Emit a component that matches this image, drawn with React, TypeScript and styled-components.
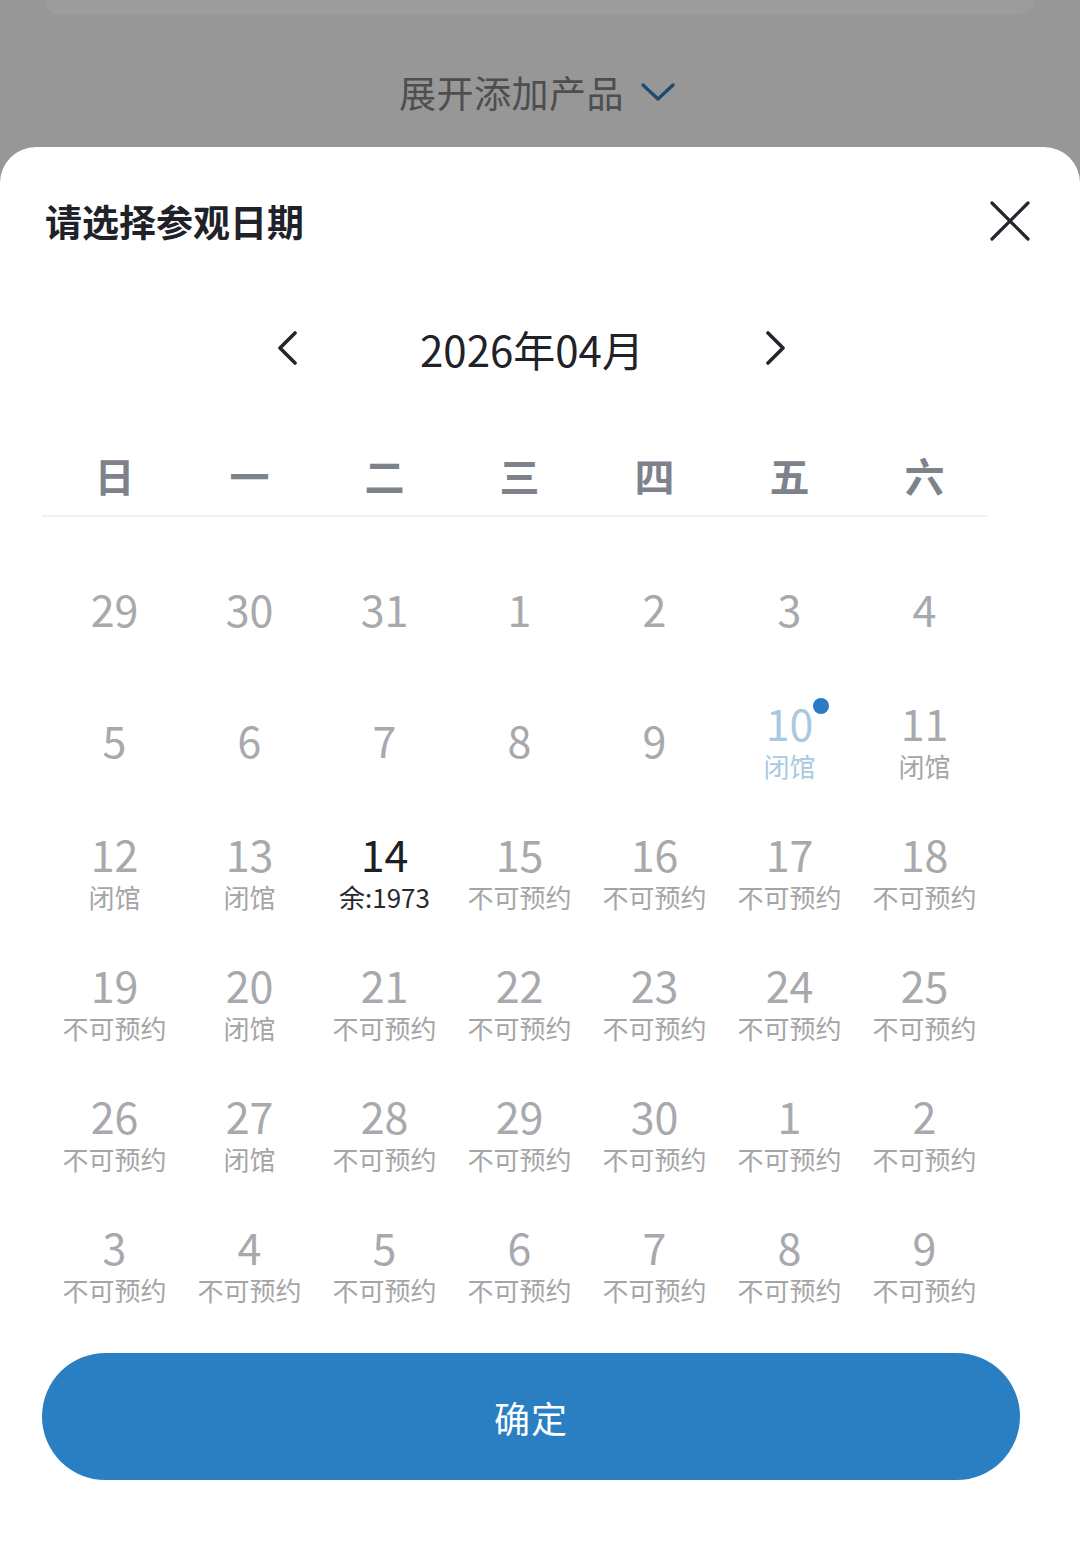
import React from 'react';
import styled, { createGlobalStyle } from 'styled-components';

const GlobalStyle = createGlobalStyle`
  html, body {
    margin: 0;
    padding: 0;
    background: #979797;
  }
  body {
    font-family: "Noto Sans CJK SC", "Noto Sans", sans-serif;
    width: 1080px;
    height: 1550px;
    overflow: hidden;
  }
`;

const Backdrop = styled.div`
  height: 147px;
  display: flex;
  flex-direction: column;
`;

const CardStub = styled.div`
  height: 15px;
  margin: 0 46px 0 45px;
  background: #9c9c9c;
  border-radius: 0 0 18px 18px;
`;

const ExpandRow = styled.div`
  flex: 1;
  display: flex;
  align-items: center;
  justify-content: center;
  gap: 17px;
  padding: 22px 6px 0 0;
  font-size: 37px;
  color: #4e4e4e;
  letter-spacing: 0.5px;
`;

const Sheet = styled.div`
  height: 1403px;
  background: #ffffff;
  border-radius: 36px 36px 0 0;
  display: flex;
  flex-direction: column;
`;

const Header = styled.div`
  height: 148px;
  display: flex;
  align-items: center;
  justify-content: space-between;
  padding: 0 50px 0 45px;
`;

const Title = styled.h2`
  margin: 0;
  font-size: 37px;
  font-weight: 700;
  color: #1f2228;
`;

const IconButton = styled.button`
  border: none;
  background: none;
  padding: 0;
  display: flex;
  align-items: center;
  justify-content: center;
  cursor: pointer;
`;

const MonthNav = styled.div`
  height: 106px;
  display: flex;
  align-items: center;
  justify-content: center;
  gap: 116px;
  padding-right: 16px;
`;

const MonthLabel = styled.div`
  font-size: 42px;
  color: #1f2228;
`;

const Calendar = styled.div`
  margin: 34px 0 0 42px;
  width: 946px;
`;

const WeekRow = styled.div`
  height: 82px;
  display: grid;
  grid-template-columns: repeat(7, 135px);
  padding-left: 5px;
  align-items: center;
  border-bottom: 2px solid #f2f2f3;
  box-sizing: border-box;
`;

const WeekDay = styled.div`
  text-align: center;
  font-size: 40px;
  font-weight: 700;
  color: #7d828b;
`;

const DayGrid = styled.div`
  margin-top: 28px;
  display: grid;
  grid-template-columns: repeat(7, 135px);
  grid-auto-rows: 131px;
  padding-left: 5px;
`;

type Tone = 'muted' | 'active' | 'today';

const DayCell = styled.div`
  display: flex;
  flex-direction: column;
  align-items: center;
  justify-content: center;
  padding-bottom: 5px;
`;

const numColor = { muted: '#a8a9ad', active: '#1c1f24', today: '#a9c9e1' };
const subColor = { muted: '#a5a5a7', active: '#26292e', today: '#a9c9e1' };

const DayNum = styled.div<{ $tone: Tone }>`
  position: relative;
  font-size: 43px;
  line-height: 44px;
  color: ${(p) => numColor[p.$tone]};
`;

const DaySub = styled.div<{ $tone: Tone }>`
  font-size: 26px;
  line-height: 36px;
  margin: 4px 0 -6px;
  color: ${(p) => subColor[p.$tone]};
`;

const Dot = styled.span`
  position: absolute;
  top: -2px;
  right: -16px;
  width: 16px;
  height: 16px;
  border-radius: 50%;
  background: #2b7cc4;
`;

const Footer = styled.div`
  padding: 22px 0 0 42px;
`;

const ConfirmButton = styled.button`
  width: 978px;
  height: 127px;
  border: none;
  border-radius: 64px;
  background: #2a7fc2;
  color: #ffffff;
  font-family: "Noto Sans CJK SC", "Noto Sans", sans-serif;
  font-size: 36px;
  letter-spacing: 1px;
  cursor: pointer;
`;

type Day = { n: number; sub?: string; tone?: Tone; dot?: boolean };

const NA = '不可预约';
const CLOSED = '闭馆';

const days: Day[] = [
  { n: 29 }, { n: 30 }, { n: 31 }, { n: 1 }, { n: 2 }, { n: 3 }, { n: 4 },
  { n: 5 }, { n: 6 }, { n: 7 }, { n: 8 }, { n: 9 },
  { n: 10, sub: CLOSED, tone: 'today', dot: true }, { n: 11, sub: CLOSED },
  { n: 12, sub: CLOSED }, { n: 13, sub: CLOSED }, { n: 14, sub: '余:1973', tone: 'active' },
  { n: 15, sub: NA }, { n: 16, sub: NA }, { n: 17, sub: NA }, { n: 18, sub: NA },
  { n: 19, sub: NA }, { n: 20, sub: CLOSED }, { n: 21, sub: NA }, { n: 22, sub: NA },
  { n: 23, sub: NA }, { n: 24, sub: NA }, { n: 25, sub: NA },
  { n: 26, sub: NA }, { n: 27, sub: CLOSED }, { n: 28, sub: NA }, { n: 29, sub: NA },
  { n: 30, sub: NA }, { n: 1, sub: NA }, { n: 2, sub: NA },
  { n: 3, sub: NA }, { n: 4, sub: NA }, { n: 5, sub: NA }, { n: 6, sub: NA },
  { n: 7, sub: NA }, { n: 8, sub: NA }, { n: 9, sub: NA },
];

const weekDays = ['日', '一', '二', '三', '四', '五', '六'];

function Chevron({ dir, color }: { dir: 'left' | 'right' | 'down'; color: string }) {
  if (dir === 'down') {
    return (
      <svg width="34" height="20" viewBox="0 0 34 20" fill="none">
        <path d="M2 3 L17 17 L32 3" stroke={color} strokeWidth="3.4" strokeLinecap="round" strokeLinejoin="round" />
      </svg>
    );
  }
  const d = dir === 'left' ? 'M21 2 L6 17 L21 32' : 'M8 2 L23 17 L8 32';
  return (
    <svg width="30" height="34" viewBox="0 0 30 34" fill="none">
      <path d={d} stroke={color} strokeWidth="3.6" strokeLinecap="round" strokeLinejoin="round" />
    </svg>
  );
}

export default function App() {
  return (
    <>
      <GlobalStyle />
      <Backdrop>
        <CardStub />
        <ExpandRow>
          <span>展开添加产品</span>
          <Chevron dir="down" color="#1e4b72" />
        </ExpandRow>
      </Backdrop>
      <Sheet>
        <Header>
          <Title>请选择参观日期</Title>
          <IconButton aria-label="关闭">
            <svg width="40" height="40" viewBox="0 0 40 40" fill="none">
              <path d="M2 2 L38 38 M38 2 L2 38" stroke="#23262c" strokeWidth="3.2" strokeLinecap="round" />
            </svg>
          </IconButton>
        </Header>
        <MonthNav>
          <IconButton aria-label="上个月">
            <Chevron dir="left" color="#23262c" />
          </IconButton>
          <MonthLabel>2026年04月</MonthLabel>
          <IconButton aria-label="下个月">
            <Chevron dir="right" color="#23262c" />
          </IconButton>
        </MonthNav>
        <Calendar>
          <WeekRow>
            {weekDays.map((w) => (
              <WeekDay key={w}>{w}</WeekDay>
            ))}
          </WeekRow>
          <DayGrid>
            {days.map((d, i) => {
              const tone = d.tone ?? 'muted';
              return (
                <DayCell key={i}>
                  <DayNum $tone={tone}>
                    {d.n}
                    {d.dot && <Dot />}
                  </DayNum>
                  {d.sub && <DaySub $tone={tone}>{d.sub}</DaySub>}
                </DayCell>
              );
            })}
          </DayGrid>
        </Calendar>
        <Footer>
          <ConfirmButton>确定</ConfirmButton>
        </Footer>
      </Sheet>
    </>
  );
}
